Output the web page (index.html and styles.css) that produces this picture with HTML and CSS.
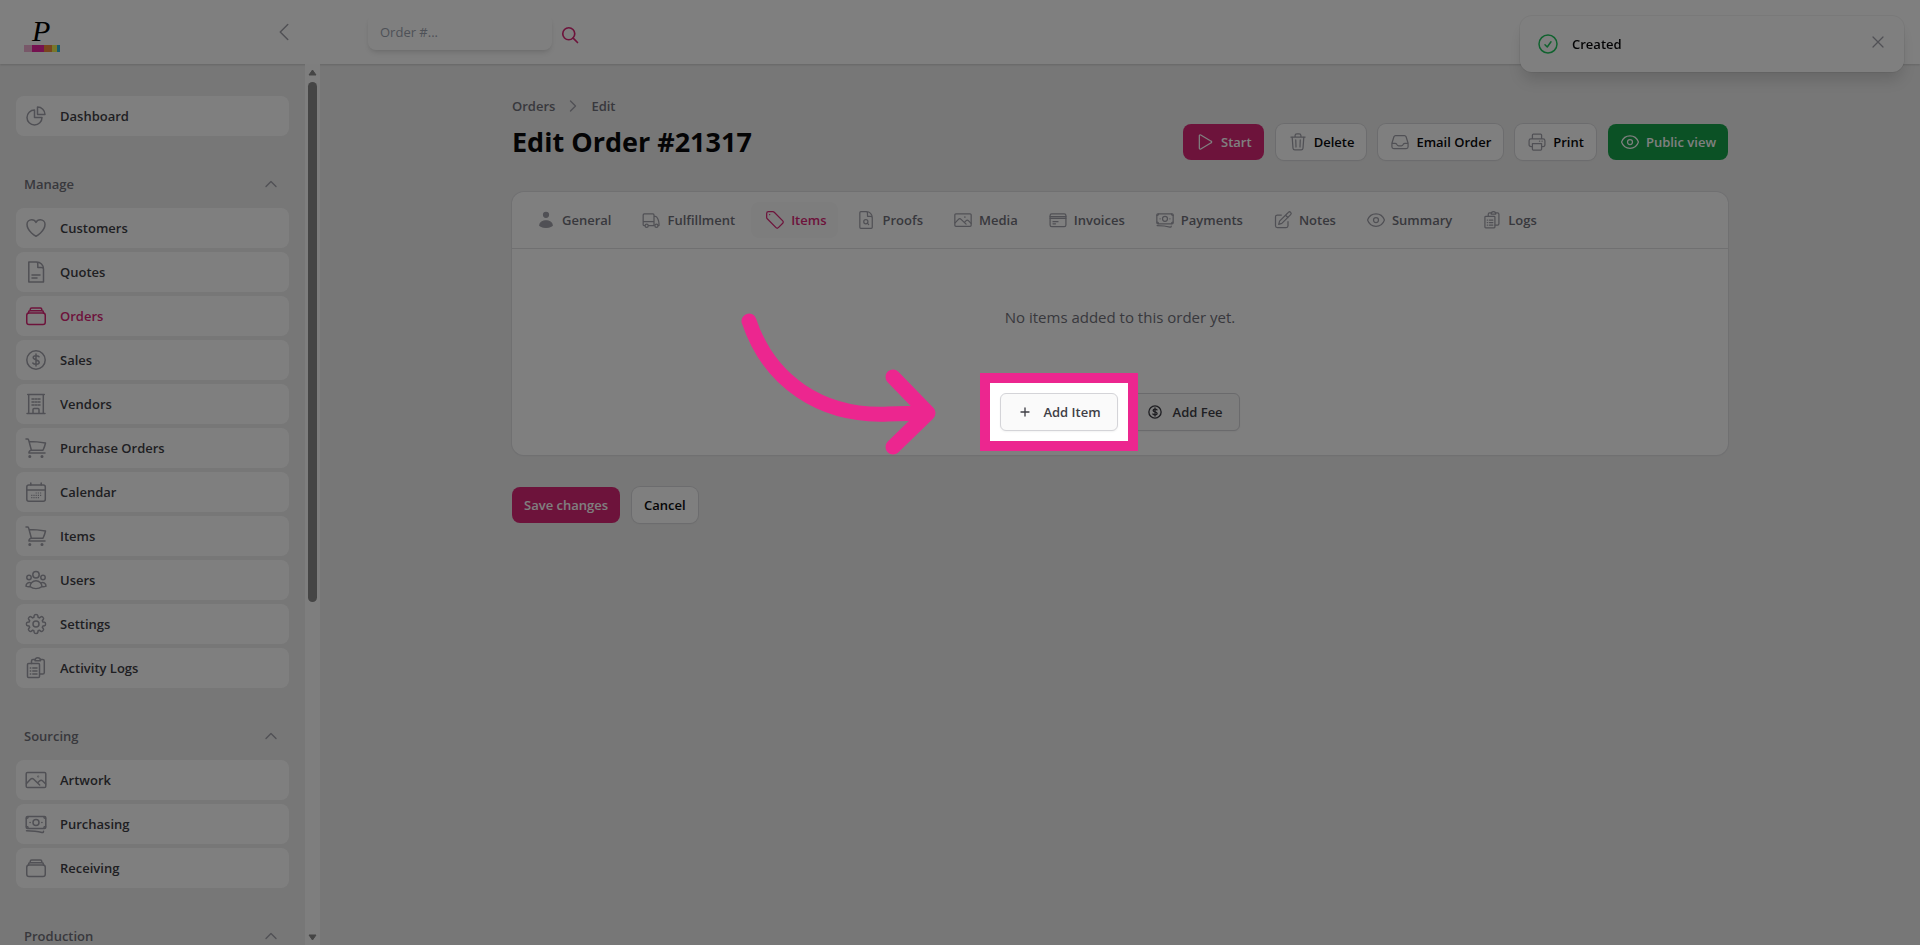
FILE: index.html
```
<!DOCTYPE html>
<html lang="en">

<head>
    <meta charset="UTF-8">
    <meta name="viewport" content="width=device-width, initial-scale=1">
    <title>Edit Order #21317</title>
    <link rel="stylesheet" href="styles.css">
</head>

<body>

    <!-- icons -->
    <svg class="sprite" aria-hidden="true">
        <symbol id="pie" viewBox="0 0 24 24"><path d="M10.5 6a7.5 7.5 0 1 0 7.5 7.5h-7.5z"/><path d="M13.5 10.5H21A7.5 7.5 0 0 0 13.5 3z"/></symbol>
        <symbol id="heart" viewBox="0 0 24 24"><path d="M21 8.25c0-2.5-2.1-4.5-4.7-4.5-1.9 0-3.6 1.1-4.3 2.7-.7-1.6-2.4-2.7-4.3-2.7C5.1 3.750 3 5.750 3 8.250c0 7.200 9 12 9 12s9-4.800 9-12z"/></symbol>
        <symbol id="doc" viewBox="0 0 24 24"><path d="M12.500 2H4.800v20h14.700V9c0-4-3-7-7-7zM12.500 2c1.500 0 1.300 2 1.300 5.500h3.500c1.500 0 2.200.5 2.200 1.500"/><path d="M8 15h8M8 18h5"/></symbol>
        <symbol id="stack" viewBox="0 0 24 24"><rect x="2.750" y="9" width="18.500" height="11.500" rx="2.250"/><path d="M4.500 9.200V8.500c0-1 .7-1.700 1.700-1.700h11.600c1 0 1.700.7 1.700 1.700v.7M6.200 6.800V5.500c0-1 .7-1.500 1.500-1.500h8.600c.8 0 1.500.5 1.500 1.500v1.300"/></symbol>
        <symbol id="dollar" viewBox="0 0 24 24"><circle cx="12" cy="12" r="9.200"/><path d="M12 6v12M15 8.800c-1-1.200-5.800-1.600-5.800.8 0 3 6 1.600 6 4.700 0 2.700-5.200 2.400-6.400.7"/></symbol>
        <symbol id="building" viewBox="0 0 24 24"><path d="M3 21.500h18M4.700 21.500v-19M19.300 21.500v-19M3.700 2.500h16.600M9 21v-3.500c0-.6.400-1 1-1h4c.6 0 1 .4 1 1V21"/><path d="M8 7h2M14 7h2M8 10h2M14 10h2M8 13h2M14 13h2M11.400 7h1.200M11.400 10h1.200M11.400 13h1.200"/></symbol>
        <symbol id="cart" viewBox="0 0 24 24"><path d="M2 3h1.500c.6 0 .9.300 1.100.9L7.400 14.200M5.200 5.500c5 0 10 .4 16.300 1.500-.5 2.500-1.400 4.900-2.500 7.200H7.500a2.700 2.700 0 0 0-2.600 2.800H21"/><circle cx="5.800" cy="20.500" r=".8"/><circle cx="18" cy="20.500" r=".8"/></symbol>
        <symbol id="calendar" viewBox="0 0 24 24"><rect x="2.800" y="5" width="18.500" height="16.200" rx="2"/><path d="M6.800 3v2M17.200 3v2M3 10h18"/><path stroke-width="1.200" stroke-linecap="butt" stroke-dasharray="1.200 1" d="M11.600 13h6M7.200 15.300h10.400M7.200 17.600h8"/></symbol>
        <symbol id="users" viewBox="0 0 24 24"><circle cx="12" cy="6.700" r="3.200"/><circle cx="5" cy="9.500" r="2.200"/><circle cx="19" cy="9.500" r="2.200"/><path d="M6 18.700a6 6 0 0 1 12 0c-3.500 2.300-8.500 2.300-12 0zM6 18.700c-1.500.2-3 0-4-.5 0-2.800 2.400-4.200 5-3.300M18 18.700c1.500.2 3 0 4-.5 0-2.800-2.400-4.200-5-3.300"/></symbol>
        <symbol id="cog" viewBox="0 0 24 24"><path d="M10.200 3.500c.2-1.300 3.400-1.300 3.600 0l.3 1.800 1.300.6 1.500-1.100c1.100-.8 3.300 1.400 2.500 2.500l-1.100 1.500.6 1.300 1.700.2c1.300.2 1.300 3.200 0 3.400l-1.700.3-.6 1.300 1.100 1.500c.8 1.100-1.400 3.300-2.500 2.500l-1.500-1.100-1.300.6-.3 1.700c-.2 1.300-3.400 1.300-3.600 0l-.3-1.700-1.300-.6-1.500 1.100c-1.100.8-3.300-1.400-2.500-2.500l1.100-1.500-.6-1.300-1.700-.3c-1.300-.2-1.300-3.200 0-3.400l1.700-.2.600-1.300-1.100-1.500c-.8-1.100 1.400-3.300 2.500-2.500l1.500 1.100 1.300-.6z"/><circle cx="12" cy="12" r="3"/></symbol>
        <symbol id="clipboard" viewBox="0 0 24 24"><path d="M7.500 7.500V5c0-1 .7-1.500 1.500-1.500h2M16.500 3.500h2.200c1 0 1.600.7 1.600 1.500v11.500c0 1-.7 1.600-1.600 1.600h-3"/><path d="M11 4.800c0-4 5.500-4 5.500 0z"/><rect x="3.500" y="7.500" width="12" height="14" rx="1"/><path d="M6.300 12h.4M8.800 12h4.200M6.300 15h.4M8.800 15h4.200M6.300 18h.4M8.800 18h4.200"/></symbol>
        <symbol id="photo" viewBox="0 0 24 24"><rect x="2.200" y="4.500" width="19.600" height="15" rx="1.300"/><path d="m2.500 15.500 4-4.300c1-1 2.200-1 3.200 0l6 5.800M14 14.500l1.500-1.500c1-1 2.200-1 3.200 0l3 3"/><circle cx="14.200" cy="8.500" r=".3"/></symbol>
        <symbol id="cash" viewBox="0 0 24 24"><rect x="2.200" y="4.500" width="19.600" height="12" rx="1.300"/><circle cx="12" cy="10.500" r="3"/><path d="M2.500 6.500c1 0 1.700-.7 1.700-1.700M21.500 6.500c-1 0-1.700-.7-1.700-1.700M2.500 14.500c1 0 1.700.7 1.700 1.700M21.500 14.500c-1 0-1.700.7-1.700 1.700M6 10.500h.2M17.800 10.500h.2M2.500 18.700c6 0 11 .5 15.500 1.800 1 .3 1.500-.3 1.500-1.300"/></symbol>
        <symbol id="person" viewBox="0 0 24 24"><circle cx="12" cy="5.700" r="3" fill="currentColor"/><path fill="currentColor" d="M4.500 18.500c0-7.300 15-7.300 15 0-3.500 3.200-11.500 3.200-15 0z"/></symbol>
        <symbol id="truck" viewBox="0 0 24 24"><path d="M4.500 18.700H3.600c-.6 0-1-.5-1-1V6c0-.8.6-1.300 1.300-1.300h10.500c.7 0 1.200.5 1.200 1.300v12.700H9M2.600 14h13M15.600 7.500h1.700c2.200 0 4.300 5.500 4.300 9v2.200h-.8"/><circle cx="6.800" cy="18.800" r="1.900"/><circle cx="18.500" cy="18.800" r="1.900"/></symbol>
        <symbol id="tag" viewBox="0 0 24 24"><path d="M9.500 2H4.200C3 2 2 3 2 4.200v4.700c0 .6.200 1.200.7 1.600L13.200 21.200c.8.800 2 .8 2.800 0l5.300-5.300c.8-.8.8-2 0-2.800L11.100 2.700c-.4-.5-1-.7-1.600-.7z"/><path d="M5.500 5.500h.2"/></symbol>
        <symbol id="docsearch" viewBox="0 0 24 24"><path d="M12.500 2H5.800c-.7 0-1.200.5-1.200 1.200v17.600c0 .7.500 1.200 1.200 1.200h12.500c.7 0 1.200-.5 1.200-1.200V9c0-4-3-7-7-7zM12.500 2c1.500 0 1.300 2 1.300 5.500h3.500c1.500 0 2.200.5 2.200 1.500"/><circle cx="11.800" cy="14" r="2.500"/><path d="m13.600 15.800 1.600 1.700"/></symbol>
        <symbol id="invoice" viewBox="0 0 24 24"><rect x="2.500" y="4.500" width="19" height="15.500" rx="2"/><path d="M2.500 8h19M2.500 10h19M6 14h6M6 16.500h3"/></symbol>
        <symbol id="pencil" viewBox="0 0 24 24"><path d="m16.800 4.500 1.700-1.700a1.900 1.900 0 0 1 2.700 2.700L10.600 16.100 6.800 17.200 7.900 13.400zM15 6.300 18 9M18 14v4.800c0 1.200-1 2.200-2.200 2.200H5.200C4 21 3 20 3 18.800V8.200C3 7 4 6 5.200 6H10"/></symbol>
        <symbol id="eye" viewBox="0 0 24 24"><path d="M2 12.300v-.6C3.500 7.500 7.400 4.500 12 4.500s8.500 3 10 7.200v.6c-1.500 4.200-5.400 7.200-10 7.200s-8.500-3-10-7.200z"/><circle cx="12" cy="12" r="3"/></symbol>
        <symbol id="play" viewBox="0 0 24 24"><path d="M5.200 4.600c0-.8.9-1.400 1.700-1l12.500 7.400c.8.400.8 1.600 0 2L6.900 20.400c-.8.400-1.700-.1-1.700-1z"/></symbol>
        <symbol id="trash" viewBox="0 0 24 24"><path d="M3.500 6h17M5 6l1 13.500c.1 1.200 1 2 2.200 2h7.600c1.200 0 2.100-.8 2.200-2L19 6M8.500 5.500V4.200c0-1.200 1-2 2.200-2h2.600c1.200 0 2.200.8 2.200 2v1.300M9.300 9.500l.3 8.500M14.700 9.500l-.3 8.500"/></symbol>
        <symbol id="inbox" viewBox="0 0 24 24"><path d="M2.300 13.500h3.800c.9 0 1.600.5 2 1.200l.3.600c.4.700 1.100 1.200 2 1.200h3.200c.9 0 1.600-.5 2-1.200l.3-.6c.4-.7 1.100-1.200 2-1.200h3.800M2.300 13.500v4.300c0 1.200 1 2.200 2.200 2.200h15c1.200 0 2.200-1 2.200-2.200v-4.300L19.300 5.700c-.3-.8-1.100-1.400-2-1.400H6.700c-.9 0-1.700.6-2 1.400z"/></symbol>
        <symbol id="printer" viewBox="0 0 24 24"><path d="M6.500 17.500H4.800c-1.200 0-2.300-1-2.300-2.200V10.500c0-1.200 1-2.200 2.200-2.200h14.600c1.200 0 2.200 1 2.200 2.200v4.800c0 1.200-1 2.200-2.300 2.200h-1.700M6.500 8.300V3.500c0-.6.500-1.100 1.100-1.100h8.800c.6 0 1.100.5 1.100 1.100v4.800M6.500 14h11v6.700c0 .6-.5 1-1 1h-9c-.5 0-1-.4-1-1zM15 11h.2M18 11h.2"/></symbol>
        <symbol id="up" viewBox="0 0 24 24"><path d="m4.500 15.750 7.500-7.500 7.500 7.500"/></symbol>
        <symbol id="left" viewBox="0 0 24 24"><path d="M15.750 19.500 8.250 12l7.500-7.500"/></symbol>
        <symbol id="right" viewBox="0 0 24 24"><path d="m8.250 4.500 7.500 7.500-7.500 7.500"/></symbol>
        <symbol id="search" viewBox="0 0 24 24"><circle cx="10.500" cy="10.500" r="7.200"/><path d="m15.800 15.800 5.200 5.200"/></symbol>
        <symbol id="check" viewBox="0 0 24 24"><circle cx="12" cy="12" r="9"/><path d="M9 12.750 11.250 15 15 9.750"/></symbol>
        <symbol id="close" viewBox="0 0 24 24"><path d="M6 18 18 6M6 6l12 12"/></symbol>
        <symbol id="plus" viewBox="0 0 24 24"><path d="M12 6v12M6 12h12"/></symbol>
    </svg>

    <header class="topbar">
        <div class="brand">
            <a href="#" class="logo" aria-label="Home">
                <svg width="36" height="40" viewBox="0 0 36 40">
                    <text x="8" y="29" class="logo_letter">P</text>
                    <rect x="0" y="33" width="8" height="7" fill="#f1b0d3"/>
                    <rect x="8" y="33" width="12" height="7" fill="#eb24a0"/>
                    <rect x="20" y="33" width="8" height="7" fill="#f08a3c"/>
                    <rect x="28" y="33" width="5" height="7" fill="#f0ee55"/>
                    <rect x="33" y="33" width="3" height="7" fill="#2fb6d8"/>
                </svg>
            </a>
            <button class="plain" aria-label="Collapse sidebar"><svg class="icon"><use href="#left"/></svg></button>
        </div>
        <form class="search">
            <input type="text" placeholder="Order #..." aria-label="Order number">
            <button type="button" class="plain" aria-label="Search"><svg class="icon"><use href="#search"/></svg></button>
        </form>
    </header>

    <div class="layout">
        <aside>
            <nav class="side_nav">
                <ul>
                    <li><a href="#"><svg class="icon"><use href="#pie"/></svg>Dashboard</a></li>
                </ul>

                <button class="group">Manage <svg class="icon"><use href="#up"/></svg></button>
                <ul>
                    <li><a href="#"><svg class="icon"><use href="#heart"/></svg>Customers</a></li>
                    <li><a href="#"><svg class="icon"><use href="#doc"/></svg>Quotes</a></li>
                    <li><a href="#" class="active"><svg class="icon"><use href="#stack"/></svg>Orders</a></li>
                    <li><a href="#"><svg class="icon"><use href="#dollar"/></svg>Sales</a></li>
                    <li><a href="#"><svg class="icon"><use href="#building"/></svg>Vendors</a></li>
                    <li><a href="#"><svg class="icon"><use href="#cart"/></svg>Purchase Orders</a></li>
                    <li><a href="#"><svg class="icon"><use href="#calendar"/></svg>Calendar</a></li>
                    <li><a href="#"><svg class="icon"><use href="#cart"/></svg>Items</a></li>
                    <li><a href="#"><svg class="icon"><use href="#users"/></svg>Users</a></li>
                    <li><a href="#"><svg class="icon"><use href="#cog"/></svg>Settings</a></li>
                    <li><a href="#"><svg class="icon"><use href="#clipboard"/></svg>Activity Logs</a></li>
                </ul>

                <button class="group">Sourcing <svg class="icon"><use href="#up"/></svg></button>
                <ul>
                    <li><a href="#"><svg class="icon"><use href="#photo"/></svg>Artwork</a></li>
                    <li><a href="#"><svg class="icon"><use href="#cash"/></svg>Purchasing</a></li>
                    <li><a href="#"><svg class="icon"><use href="#stack"/></svg>Receiving</a></li>
                </ul>

                <button class="group">Production <svg class="icon"><use href="#up"/></svg></button>
            </nav>
            <div class="scrollbar">
                <svg width="9" height="7" viewBox="0 0 9 7"><path d="M4.500 1 8 6H1z"/></svg>
                <div class="track"><div class="thumb"></div></div>
                <svg width="9" height="7" viewBox="0 0 9 7"><path d="M4.500 6 8 1H1z"/></svg>
            </div>
        </aside>

        <main>
            <div class="content">
                <nav class="breadcrumbs">
                    <a href="#">Orders</a>
                    <svg class="icon"><use href="#right"/></svg>
                    <span>Edit</span>
                </nav>

                <div class="page_head">
                    <h1>Edit Order #21317</h1>
                    <div class="actions">
                        <button class="btn pink"><svg class="icon"><use href="#play"/></svg>Start</button>
                        <button class="btn"><svg class="icon"><use href="#trash"/></svg>Delete</button>
                        <button class="btn"><svg class="icon"><use href="#inbox"/></svg>Email Order</button>
                        <button class="btn"><svg class="icon"><use href="#printer"/></svg>Print</button>
                        <button class="btn green"><svg class="icon"><use href="#eye"/></svg>Public view</button>
                    </div>
                </div>

                <section class="card">
                    <div class="tabs" role="tablist">
                        <button role="tab"><svg class="icon"><use href="#person"/></svg>General</button>
                        <button role="tab"><svg class="icon"><use href="#truck"/></svg>Fulfillment</button>
                        <button role="tab" class="active" aria-selected="true"><svg class="icon"><use href="#tag"/></svg>Items</button>
                        <button role="tab"><svg class="icon"><use href="#docsearch"/></svg>Proofs</button>
                        <button role="tab"><svg class="icon"><use href="#photo"/></svg>Media</button>
                        <button role="tab"><svg class="icon"><use href="#invoice"/></svg>Invoices</button>
                        <button role="tab"><svg class="icon"><use href="#cash"/></svg>Payments</button>
                        <button role="tab"><svg class="icon"><use href="#pencil"/></svg>Notes</button>
                        <button role="tab"><svg class="icon"><use href="#eye"/></svg>Summary</button>
                        <button role="tab"><svg class="icon"><use href="#clipboard"/></svg>Logs</button>
                    </div>
                    <div class="empty">
                        <p>No items added to this order yet.</p>
                        <div class="add_buttons">
                            <div class="add_item">
                                <button class="add"><svg class="icon"><use href="#plus"/></svg>Add Item</button>
                                <div class="spotlight"></div>
                                <svg class="arrow" width="200" height="148" viewBox="0 0 200 148">
                                    <path d="M11 11C31 71 83 107 150 104L188 103M155 67 190 103 155 137"/>
                                </svg>
                            </div>
                            <button class="add"><svg class="icon"><use href="#dollar"/></svg>Add Fee</button>
                        </div>
                    </div>
                </section>

                <div class="form_actions">
                    <button class="btn pink">Save changes</button>
                    <button class="btn">Cancel</button>
                </div>
            </div>
        </main>
    </div>

    <div class="toast" role="status">
        <svg class="icon"><use href="#check"/></svg>
        <span>Created</span>
        <button class="plain" aria-label="Close"><svg class="icon"><use href="#close"/></svg></button>
    </div>

</body>

</html>
```
FILE: styles.css
```
* {
    box-sizing: border-box;
}

body {
    margin: 0;
    height: 100vh;
    overflow: hidden;
    display: flex;
    flex-direction: column;
    background-color: #eeeeee;
    color: #09090b;
    font-family: "Open Sans", "Noto Sans", sans-serif;
    font-size: 13px;
    line-height: 20px;
    font-weight: 600;
}

button,
input {
    font: inherit;
    color: inherit;
}

button {
    border: 0;
    background: none;
    cursor: pointer;
}

a {
    color: inherit;
    text-decoration: none;
}

ul {
    list-style: none;
    margin: 0;
    padding: 0;
}

.sprite {
    display: none;
}

.icon {
    width: 24px;
    height: 24px;
    flex: none;
    fill: none;
    stroke: currentColor;
    stroke-width: 1.5;
    stroke-linecap: round;
    stroke-linejoin: round;
    color: #a1a1aa;
}

.plain {
    display: flex;
    padding: 0;
}

/* top bar */

.topbar {
    display: flex;
    flex: none;
    height: 64px;
    background-color: white;
    box-shadow: 0 1px 2px rgba(0, 0, 0, 0.15);
}

.brand {
    display: flex;
    width: 320px;
    align-items: center;
    justify-content: space-between;
    padding: 0 24px;
}

.logo {
    display: flex;
}

.logo svg {
    overflow: visible;
}

.logo_letter {
    font-family: "Liberation Serif", serif;
    font-size: 30px;
    font-style: italic;
    font-weight: 400;
}

.search {
    display: flex;
    align-items: center;
    gap: 8px;
    padding-left: 48px;
}

.search input {
    width: 184px;
    height: 36px;
    padding: 0 12px;
    border: 0;
    border-radius: 8px;
    background-color: white;
    box-shadow: 0 4px 6px -1px rgba(0, 0, 0, 0.1), 0 2px 4px -2px rgba(0, 0, 0, 0.1);
    font-weight: 400;
}

.search input::placeholder {
    color: #9ca3af;
}

.search .plain {
    padding-top: 6px;
}

.search .icon {
    width: 20px;
    height: 20px;
    color: #db2777;
    stroke-width: 2;
}

/* sidebar */

.layout {
    display: flex;
    flex: 1;
    min-height: 0;
}

aside {
    display: flex;
    flex: none;
    width: 320px;
    overflow: hidden;
}

.side_nav {
    flex: 1;
    padding: 32px 16px 0;
}

.side_nav li {
    margin-bottom: 4px;
}

.side_nav li:last-child {
    margin-bottom: 0;
}

.side_nav a {
    display: flex;
    align-items: center;
    gap: 12px;
    height: 40px;
    padding: 0 8px;
    border-radius: 8px;
    background-color: white;
    color: #3f3f46;
}

.side_nav .active,
.side_nav .active .icon {
    color: #db2777;
}

.group {
    display: flex;
    align-items: center;
    justify-content: space-between;
    width: 100%;
    height: 24px;
    margin: 36px 0 12px;
    padding: 0 10px 0 8px;
    color: #71717a;
}

.group .icon {
    width: 16px;
    height: 16px;
    stroke-width: 2;
}

.scrollbar {
    display: flex;
    flex-direction: column;
    align-items: center;
    gap: 6px;
    width: 15px;
    padding: 5px 0 4px;
    background-color: #fcfcfc;
}

.scrollbar svg {
    fill: #8b8b8b;
    stroke: #8b8b8b;
    stroke-linejoin: round;
    flex: none;
}

.track {
    flex: 1;
    width: 9px;
}

.thumb {
    height: 61.5%;
    border-radius: 5px;
    background-color: #8b8b8b;
}

/* page */

main {
    flex: 1;
    padding: 32px;
}

.content {
    max-width: 1216px;
    margin: 0 auto;
}

.breadcrumbs {
    display: flex;
    align-items: center;
    gap: 10px;
    color: #71717a;
}

.breadcrumbs .icon {
    width: 16px;
    height: 16px;
    stroke-width: 2;
}

.page_head {
    display: flex;
    align-items: center;
    justify-content: space-between;
    margin: 8px 0 32px;
}

h1 {
    margin: 0;
    font-size: 27px;
    line-height: 36px;
    font-weight: 700;
}

.actions,
.form_actions {
    display: flex;
    gap: 12px;
}

.btn {
    display: flex;
    align-items: center;
    gap: 6px;
    height: 36px;
    padding: 0 12px;
    border-radius: 8px;
    background-color: white;
    box-shadow: 0 0 0 1px #d9d9dc, 0 1px 2px rgba(0, 0, 0, 0.05);
}

.btn .icon {
    width: 20px;
    height: 20px;
}

.pink,
.green {
    color: white;
    box-shadow: none;
}

.pink {
    background-color: #db2777;
}

.green {
    background-color: #16a34a;
}

.pink .icon,
.green .icon {
    color: white;
}

.card {
    border-radius: 12px;
    background-color: white;
    box-shadow: 0 0 0 1px #e0e0e3, 0 1px 2px rgba(0, 0, 0, 0.05);
}

.tabs {
    display: flex;
    gap: 4px;
    padding: 10px;
    border-bottom: 1px solid #e0e0e3;
}

.tabs button {
    display: flex;
    align-items: center;
    gap: 6px;
    height: 36px;
    padding: 0 12px 0 14px;
    border-radius: 8px;
    color: #71717a;
}

.tabs .icon {
    width: 20px;
    height: 20px;
}

.tabs .active {
    background-color: #fafafa;
}

.tabs .active,
.tabs .active .icon {
    color: #db2777;
}

.empty {
    padding: 56px 24px 24px;
    text-align: center;
}

.empty p {
    margin: 0 0 64px;
    color: #71717a;
    font-size: 15px;
    line-height: 24px;
    font-weight: 400;
}

.add_buttons {
    display: flex;
    justify-content: center;
    gap: 12px;
}

.add_item {
    position: relative;
}

.add {
    display: flex;
    align-items: center;
    gap: 10px;
    height: 38px;
    padding: 0 16px;
    border: 1px solid #d4d4d8;
    border-radius: 6px;
    background-color: #fafafa;
    color: #3f3f46;
    box-shadow: 0 1px 2px rgba(0, 0, 0, 0.05);
}

.add .icon {
    width: 16px;
    height: 16px;
    color: #3f3f46;
    stroke-width: 2;
}

.form_actions {
    margin-top: 32px;
}

/* guided step: dims everything but the highlighted button */

.spotlight {
    position: absolute;
    inset: -20px;
    z-index: 10;
    border: 10px solid #ec268f;
    box-shadow: 0 0 0 3000px rgba(0, 0, 0, 0.5);
    pointer-events: none;
}

.arrow {
    position: absolute;
    right: 180px;
    top: -83px;
    z-index: 11;
    fill: none;
    stroke: #ec268f;
    stroke-width: 15;
    stroke-linecap: round;
    stroke-linejoin: round;
    pointer-events: none;
}

/* toast */

.toast {
    position: fixed;
    top: 16px;
    right: 16px;
    z-index: 5;
    display: flex;
    align-items: center;
    gap: 12px;
    width: 384px;
    height: 56px;
    padding: 0 16px;
    border-radius: 12px;
    background-color: white;
    box-shadow: 0 0 0 1px rgba(0, 0, 0, 0.05), 0 10px 15px -3px rgba(0, 0, 0, 0.15);
}

.toast .icon {
    color: #22c55e;
}

.toast .plain {
    margin-left: auto;
    padding-bottom: 4px;
}

.toast .plain .icon {
    width: 20px;
    height: 20px;
    color: #a1a1aa;
}
```
